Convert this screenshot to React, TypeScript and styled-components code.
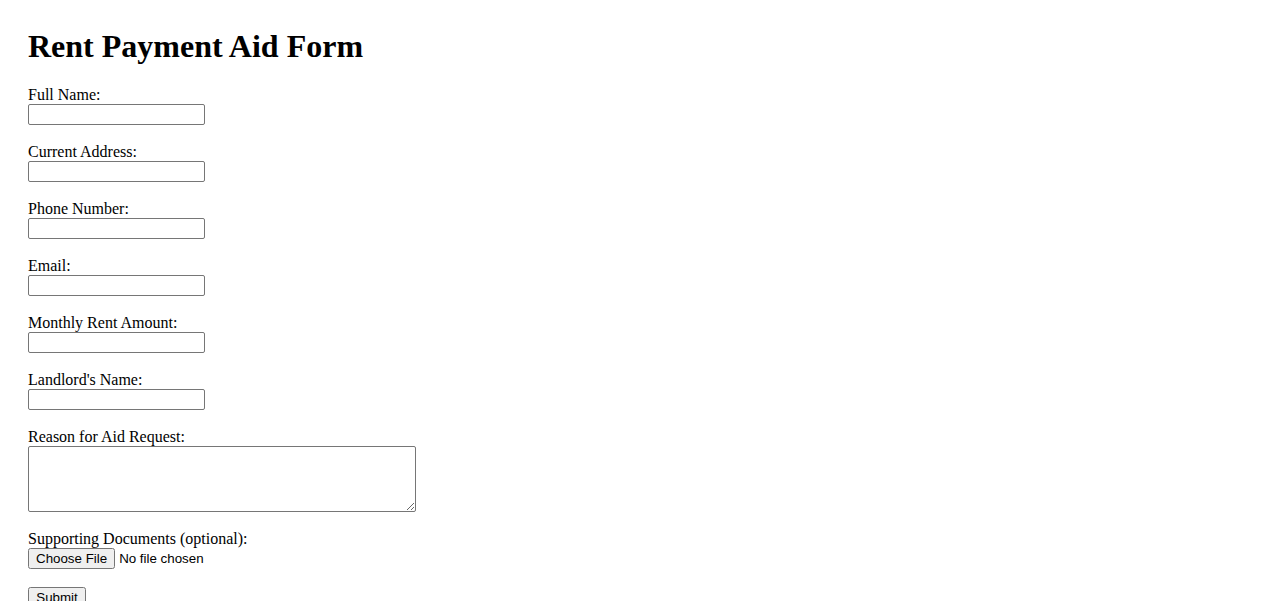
import React from 'react';
import styled, { createGlobalStyle } from 'styled-components';

const GlobalStyle = createGlobalStyle`
  html, body {
    margin: 0;
    padding: 0;
    background: #ffffff;
  }

  body {
    font-family: "Liberation Serif", "Times New Roman", serif;
    font-size: 16px;
    color: #000000;
  }
`;

const Page = styled.div`
  padding: 28px;
`;

const Title = styled.h1`
  margin: 0 0 21px;
  font-size: 32px;
  line-height: 37px;
  font-weight: bold;
`;

const Form = styled.form`
  display: flex;
  flex-direction: column;
  align-items: flex-start;
`;

const Field = styled.div<{ $gap?: number }>`
  display: flex;
  flex-direction: column;
  align-items: flex-start;
  margin-bottom: ${(p) => p.$gap ?? 18}px;
`;

const Label = styled.label`
  display: block;
  line-height: 18px;
  height: 18px;
`;

const controlFont = `
  font-family: "Liberation Sans", Arial, sans-serif;
  font-size: 13.333px;
`;

const TextInput = styled.input`
  ${controlFont}
  box-sizing: border-box;
  width: 177px;
  height: 21px;
  margin: 0;
  padding: 1px 2px;
  border: 1px solid #767676;
  border-radius: 2px;
`;

const TextArea = styled.textarea`
  box-sizing: border-box;
  width: 388px;
  height: 66px;
  margin: 0;
  padding: 2px;
  border: 1px solid #767676;
  border-radius: 2px;
  font-family: "Liberation Mono", monospace;
  font-size: 13.333px;
`;

const FileInput = styled.input`
  ${controlFont}
  height: 21px;
  margin: 0;
`;

const SubmitButton = styled.button`
  ${controlFont}
  box-sizing: border-box;
  width: 58px;
  height: 21px;
  margin: 0;
  padding: 1px 6px;
`;

const fields = [
  { id: 'fullName', label: 'Full Name:', type: 'text' },
  { id: 'address', label: 'Current Address:', type: 'text' },
  { id: 'phone', label: 'Phone Number:', type: 'tel' },
  { id: 'email', label: 'Email:', type: 'email' },
  { id: 'rent', label: 'Monthly Rent Amount:', type: 'number' },
  { id: 'landlord', label: "Landlord's Name:", type: 'text' },
];

export default function App() {
  return (
    <Page>
      <GlobalStyle />
      <Title>Rent Payment Aid Form</Title>
      <Form onSubmit={(e) => e.preventDefault()}>
        {fields.map((f) => (
          <Field key={f.id}>
            <Label htmlFor={f.id}>{f.label}</Label>
            <TextInput id={f.id} name={f.id} type={f.type} />
          </Field>
        ))}
        <Field>
          <Label htmlFor="reason">Reason for Aid Request:</Label>
          <TextArea id="reason" name="reason" />
        </Field>
        <Field>
          <Label htmlFor="documents">Supporting Documents (optional):</Label>
          <FileInput id="documents" name="documents" type="file" />
        </Field>
        <SubmitButton type="submit">Submit</SubmitButton>
      </Form>
    </Page>
  );
}
